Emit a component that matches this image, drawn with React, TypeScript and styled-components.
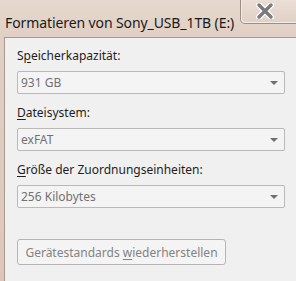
import styled, { createGlobalStyle } from "styled-components";

const GlobalStyle = createGlobalStyle`
    html, body {
        margin: 0;
        padding: 0;
        background: #e2d2c6;
    }
    #root {
        width: 296px;
        height: 281px;
        overflow: hidden;
    }
`;

const fields = [
    { pre: "S", key: "p", post: "eicherkapazität:", value: "931 GB" },
    { pre: "", key: "D", post: "ateisystem:", value: "exFAT" },
    { pre: "", key: "G", post: "röße der Zuordnungseinheiten:", value: "256 Kilobytes" },
];

export default function App() {
    return (
        <>
            <GlobalStyle />
            <Window>
                <TitleBar>
                    <Title>Formatieren von Sony_USB_1TB (E:)</Title>
                    <CloseButton>
                        <svg width="22" height="16" viewBox="0 0 22 16">
                            <path d="M5 2 L17 14 M17 2 L5 14" stroke="#ffffff" strokeWidth="6" strokeLinecap="round" />
                            <path d="M5 2 L17 14 M17 2 L5 14" stroke="#7b7b7b" strokeWidth="3.4" strokeLinecap="round" />
                        </svg>
                    </CloseButton>
                </TitleBar>
                <Panel>
                    {fields.map((f) => (
                        <Field key={f.value}>
                            <Label>
                                {f.pre}
                                <u>{f.key}</u>
                                {f.post}
                            </Label>
                            <Combo>
                                <ComboText>{f.value}</ComboText>
                                <Arrow />
                            </Combo>
                        </Field>
                    ))}
                    <ResetButton>
                        <span>
                            Gerätestandards <u>w</u>iederherstellen
                        </span>
                    </ResetButton>
                </Panel>
            </Window>
        </>
    );
}

const Window = styled.div`
    width: 296px;
    height: 281px;
    display: flex;
    flex-direction: column;
    background: linear-gradient(#e6d8ce, #e0cfc3 40px, #dcc8bb);
    font-family: "Noto Sans", "Open Sans", sans-serif;
`;

const TitleBar = styled.div`
    height: 37px;
    display: flex;
    justify-content: space-between;
    align-items: flex-start;
    flex-shrink: 0;
`;

const Title = styled.div`
    margin: 13px 0 0 5px;
    font-size: 14px;
    line-height: 20px;
    color: #1a1a1a;
    letter-spacing: -0.1px;
    white-space: nowrap;
`;

const CloseButton = styled.div`
    width: 57px;
    height: 25px;
    margin-top: -1px;
    margin-right: -1px;
    box-sizing: border-box;
    border: 1px solid #9d8e84;
    border-top: none;
    border-bottom-left-radius: 5px;
    background: linear-gradient(#ebdfd7, #e0d0c5);
    box-shadow: inset 1px -1px 0 #f3ebe5;
    display: flex;
    align-items: center;
    justify-content: center;
    padding-right: 8px;
`;

const Panel = styled.div`
    flex: 1;
    margin-left: 4px;
    margin-right: -10px;
    border: 1px solid #a8998f;
    border-bottom: none;
    background: #f0f0f0;
    padding: 10px 0 0 12px;
    display: flex;
    flex-direction: column;
`;

const Field = styled.div`
    display: flex;
    flex-direction: column;
    gap: 7px;
    margin-bottom: 11px;
`;

const Label = styled.div`
    font-size: 12px;
    line-height: 16px;
    color: #1e1e1e;
    white-space: nowrap;

    u {
        text-underline-offset: 2px;
    }
`;

const Combo = styled.div`
    width: 268px;
    height: 23px;
    box-sizing: border-box;
    border: 1px solid #b9b9b9;
    border-radius: 2px;
    background: #f4f4f4;
    display: flex;
    align-items: center;
    justify-content: space-between;
    padding: 0 6px 0 3px;
`;

const ComboText = styled.span`
    font-size: 12px;
    color: #727272;
`;

const Arrow = styled.span`
    width: 0;
    height: 0;
    border-left: 4px solid transparent;
    border-right: 4px solid transparent;
    border-top: 4px solid #6f6f6f;
    margin-top: 1px;
`;

const ResetButton = styled.div`
    align-self: flex-start;
    margin-top: 20px;
    width: 209px;
    height: 26px;
    box-sizing: border-box;
    border: 1px solid #b5b5b5;
    border-radius: 3px;
    background: #f4f4f4;
    font-size: 12px;
    color: #838383;
    display: flex;
    align-items: center;
    justify-content: center;
    white-space: nowrap;

    u {
        text-underline-offset: 2px;
    }
`;
